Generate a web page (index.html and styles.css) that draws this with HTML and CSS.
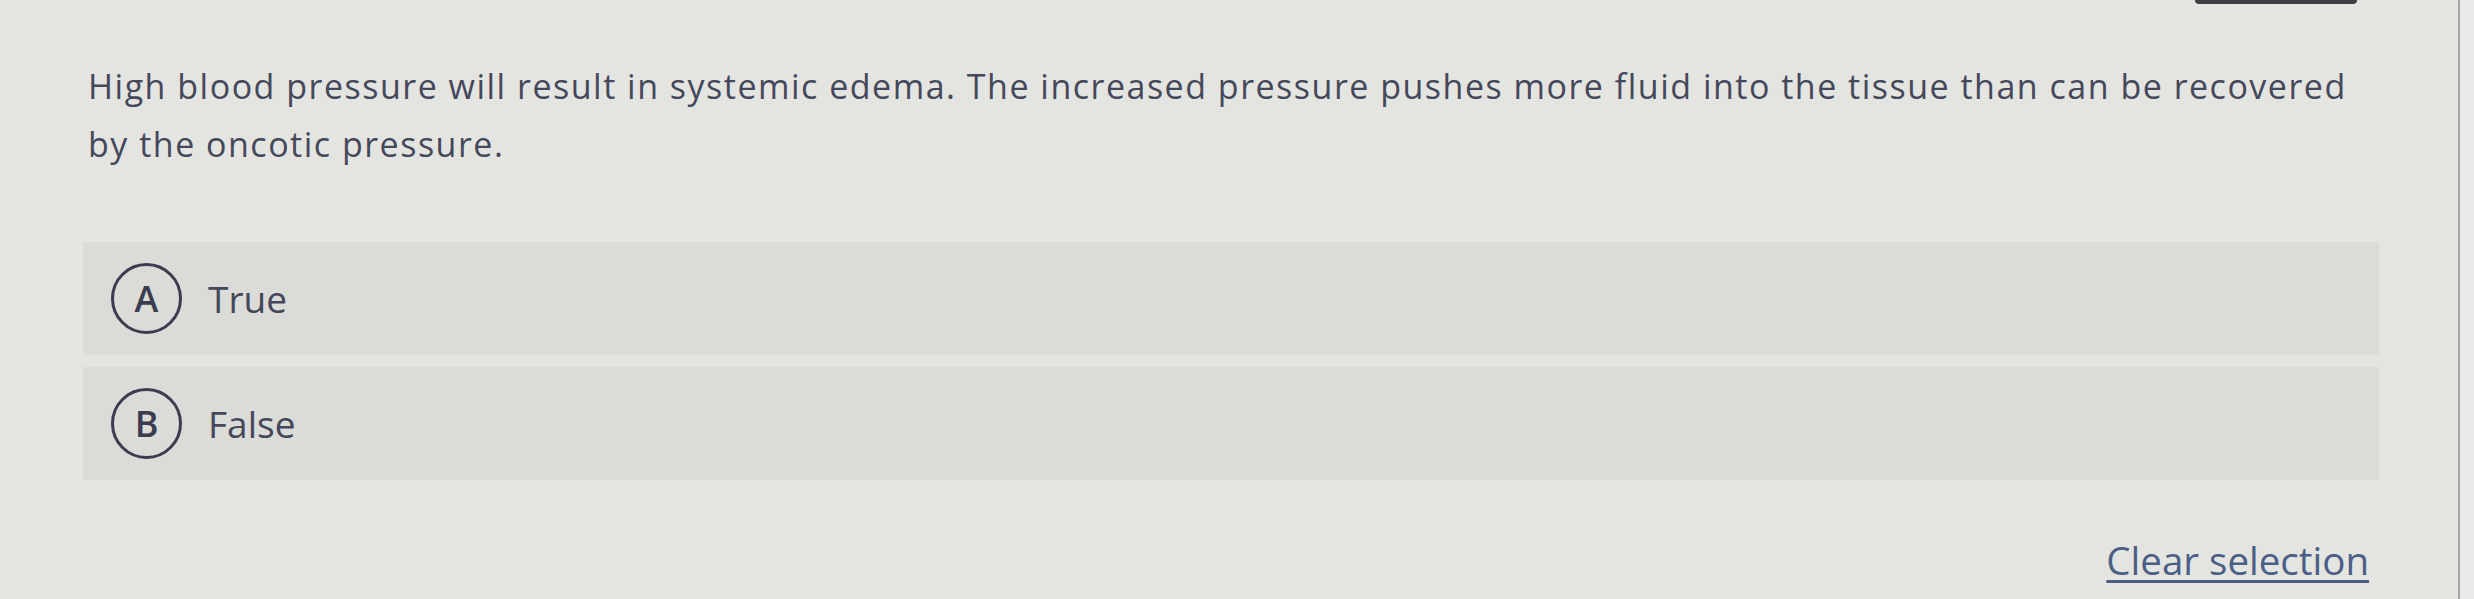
FILE: index.html
```html
<!DOCTYPE html>
<html lang="en">
<head>
<meta charset="UTF-8">
<meta name="viewport" content="width=device-width, initial-scale=1.0">
<title>Question</title>
<link rel="stylesheet" href="styles.css">
</head>
<body>

<div class="screen">

  <!-- QUESTION PANEL -->
  <div class="panel">
    <div class="toolbar"><span class="tool-btn"></span></div>

    <p class="prompt">High blood pressure will result in systemic edema. The increased pressure pushes more fluid into the tissue than can be recovered by the oncotic pressure.</p>

    <div class="choices">
      <label class="choice">
        <span class="letter">A</span>
        <span class="choice-text">True</span>
      </label>
      <label class="choice">
        <span class="letter">B</span>
        <span class="choice-text">False</span>
      </label>
    </div>

    <div class="actions">
      <a href="#" class="clear">Clear selection</a>
    </div>
  </div>

  <!-- RIGHT RAIL -->
  <div class="rail"></div>

</div>

</body>
</html>
```

FILE: styles.css
```css
/* RESET */
*{
  margin:0;
  padding:0;
  box-sizing:border-box;
  font-family:"Open Sans", Arial, sans-serif;
}

body{
  background:#e4e4e1;
  color:#45485a;
  height:100vh;
  overflow:hidden;
}

.screen{
  display:flex;
  height:100%;
}

/* PANEL */
.panel{
  flex:1;
  padding:0 79px 0 83px;
  border-right:2px solid #a3a3ab;
}

.toolbar{
  display:flex;
  justify-content:flex-end;
  height:4px;
  padding-right:22px;
}

.tool-btn{
  width:162px;
  height:4px;
  background:#3d3e42;
  border-radius:0 0 6px 6px;
}

.prompt{
  margin:53px 0 0 5px;
  font-size:34px;
  line-height:58px;
  letter-spacing:1.5px;
}

/* CHOICES */
.choices{
  margin-top:69px;
  display:flex;
  flex-direction:column;
  gap:12px;
}

.choice{
  display:flex;
  align-items:center;
  height:113px;
  padding-left:28px;
  background:#dbdbd8;
  cursor:pointer;
}

.letter{
  width:71px;
  height:71px;
  border:3.5px solid #3b3c50;
  border-radius:50%;
  display:flex;
  justify-content:center;
  align-items:center;
  font-size:36px;
  font-weight:600;
  color:#3b3c50;
}

.choice-text{
  margin-left:26px;
  font-size:37px;
  color:#45485a;
}

/* ACTIONS */
.actions{
  display:flex;
  justify-content:flex-end;
  margin-top:55px;
  padding-right:10px;
}

.clear{
  font-size:38.5px;
  line-height:50px;
  color:#4b5f86;
  text-decoration:underline;
  text-decoration-thickness:3px;
  text-underline-offset:5px;
}

/* RAIL */
.rail{
  width:14px;
  background:#eaeae9;
}
```
